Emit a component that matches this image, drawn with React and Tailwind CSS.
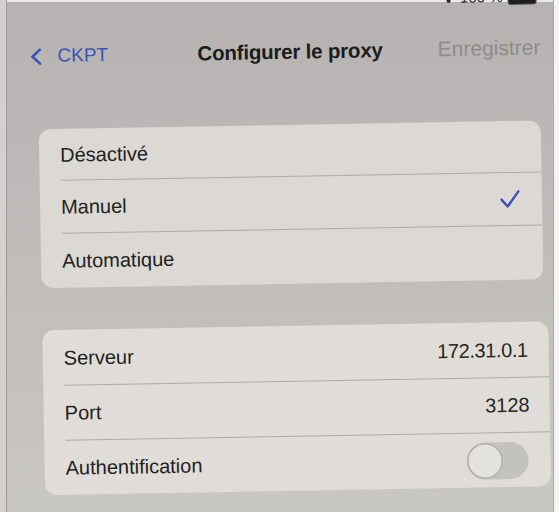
import React from "react";

const font = { fontFamily: '"Liberation Sans", Arial, sans-serif' };

function Check() {
  return (
    <svg width="20" height="18" viewBox="0 0 20 18" fill="none">
      <polyline points="1.5,9.5 7.5,16.5 18.5,1.5" stroke="#3c51b4" strokeWidth="2.4" strokeLinecap="round" strokeLinejoin="round" />
    </svg>
  );
}

function Chevron() {
  return (
    <svg width="11" height="17" viewBox="0 0 11 17" fill="none">
      <polyline points="9.5,1.5 2,8.5 9.5,15.5" stroke="#3d53b6" strokeWidth="2.6" strokeLinecap="round" strokeLinejoin="round" />
    </svg>
  );
}

function Row({ label, right, h, last }) {
  return (
    <div className={`flex items-stretch ${h}`}>
      <div className={`flex flex-1 items-center ${last ? "" : "border-b border-[#aeaba7]"} ml-[21px]`}>
        <span className="flex-1 text-[20px] text-[#222]">{label}</span>
        {right}
      </div>
    </div>
  );
}

export default function App() {
  return (
    <div className="w-[559px] h-[512px] overflow-hidden bg-[#f1f1f1] flex" style={font}>
      <div className="w-[6px] h-full bg-[#d3d1d0]" />
      <div className="w-[1px] h-full bg-[#9c9998]" />
      <div className="w-[546px] h-full flex flex-col bg-linear-to-b from-[#b5b2b1] via-[#bfbcba] to-[#c9c7c3]">
        <div className="h-[2px] bg-[#e9e8e8]" />
        <div className="flex-1 flex flex-col -rotate-1">
          {/* status bar (cut off at the top edge, as in the photo) */}
          <div className="h-[7px] overflow-hidden flex items-end justify-end pr-[12px] gap-[5px]">
            <svg width="12" height="16" viewBox="0 0 12 16" className="shrink-0">
              <circle cx="6" cy="11" r="2" fill="#2a2a2a" />
            </svg>
            <span className="text-[15px] leading-[16px] h-[16px] text-[#2a2a2a] shrink-0">100 %</span>
            <div className="w-[29px] h-[16px] rounded-[3px] bg-[#1e1e1e] border border-[#555] shrink-0" />
          </div>

          {/* nav header */}
          <div className="h-[86px] flex items-center pl-[27px] pr-[9px]">
            <div className="flex items-center gap-[16px] w-[167px]">
              <Chevron />
              <span className="text-[19px] text-[#3d53b6]">CKPT</span>
            </div>
            <span className="text-[20.5px] font-bold text-[#1c1c1c] tracking-[-0.2px]">Configurer le proxy</span>
            <span className="ml-auto text-[21px] text-[#8e8c8b]">Enregistrer</span>
          </div>

          {/* card 1 */}
          <div className="mt-[30px] ml-[34px] w-[502px] rounded-[12px] bg-[#dcd9d4] overflow-hidden">
            <Row label="Désactivé" h="h-[52px]" />
            <Row label="Manuel" h="h-[53px]" right={<div className="pr-[22px] flex items-center"><Check /></div>} />
            <Row label="Automatique" h="h-[54px]" last />
          </div>

          {/* card 2 */}
          <div className="mt-[42px] ml-[34px] w-[506px] rounded-[12px] bg-[#e0ddd8] overflow-hidden">
            <Row
              label="Serveur"
              h="h-[56px]"
              right={<span className="pr-[21px] text-[20px] tracking-[-0.4px] text-[#262626]">172.31.0.1</span>}
            />
            <Row
              label="Port"
              h="h-[55px]"
              right={<span className="pr-[20px] text-[20px] text-[#262626]">3128</span>}
            />
            <Row
              label="Authentification"
              h="h-[54px]"
              last
              right={
                <div className="pr-[22px] flex items-center">
                  <div className="w-[62px] h-[37px] rounded-full bg-[#c4c2be] flex items-center p-[1px]">
                    <div className="w-[35px] h-[35px] rounded-full bg-[#e4e2de] border border-[#a9a7a3]" />
                  </div>
                </div>
              }
            />
          </div>
        </div>
      </div>
      <div className="w-[1px] h-full bg-[#aaa8a7]" />
      <div className="flex-1 h-full bg-[#f4f4f4]" />
    </div>
  );
}
